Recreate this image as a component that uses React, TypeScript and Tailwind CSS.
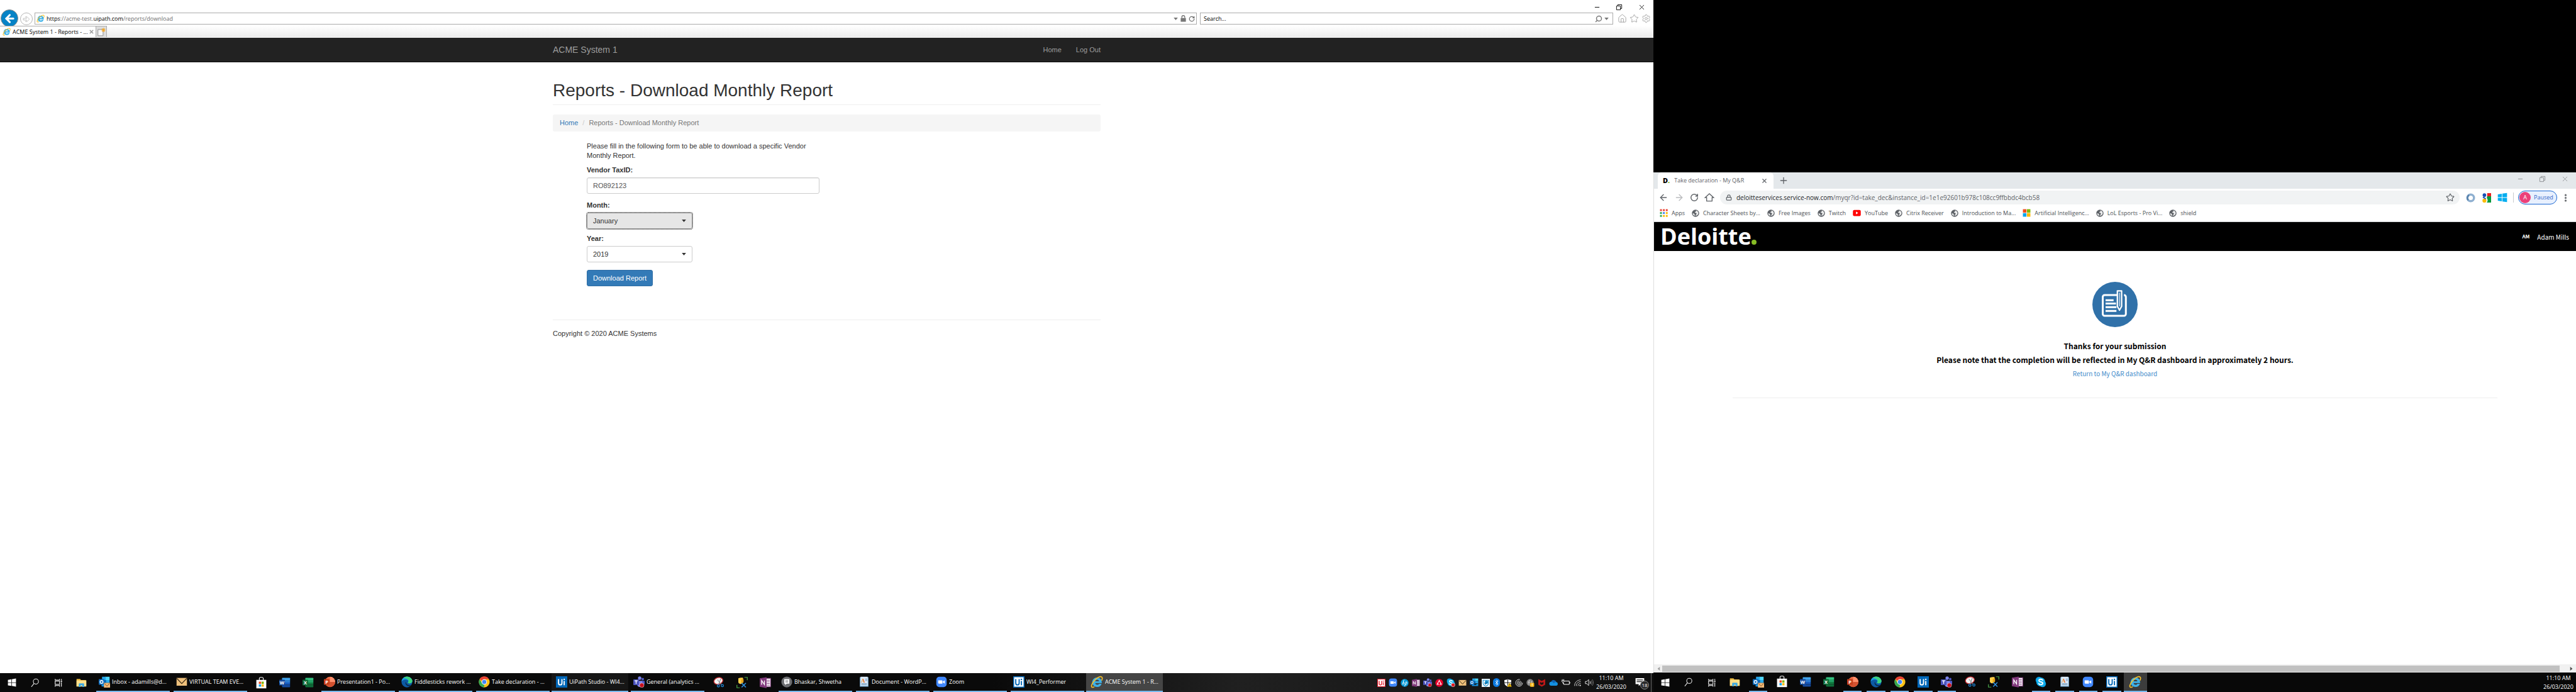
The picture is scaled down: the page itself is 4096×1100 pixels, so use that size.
import React from "react";
import {
  ArrowLeft,
  ArrowRight,
  Bluetooth,
  Home,
  Lock,
  Minus,
  MoreVertical,
  Plus,
  RotateCw,
  Search,
  Settings,
  Star,
  X,
} from "lucide-react";

type IconProps = { className?: string };

const UI = "font-['Open_Sans','Noto_Sans',sans-serif]";

/* ---------- Brand and application icons ---------- */

function Svg({ className = "size-[18px]", children }: IconProps & { children: React.ReactNode }) {
  return (
    <svg viewBox="0 0 24 24" className={`shrink-0 ${className}`} aria-hidden="true">
      {children}
    </svg>
  );
}

function WindowsIcon({ className }: IconProps) {
  return (
    <Svg className={className ?? "size-[14px]"}>
      <path fill="currentColor" d="M1 4.5 10.5 3v8.400H1zM11.800 2.800 23 1v10.400H11.800zM1 12.700h9.500V21L1 19.600zM11.800 12.700H23V23l-11.200-1.800z" />
    </Svg>
  );
}

function SearchGlyph() {
  return (
    <Svg className="size-[15px]">
      <circle cx="14.5" cy="8.5" r="6.5" fill="none" stroke="#fff" strokeWidth="1.6" />
      <path d="M10 13.2 3 22" stroke="#fff" strokeWidth="1.8" />
    </Svg>
  );
}

function TaskViewIcon() {
  return (
    <Svg className="size-[14px]">
      <g fill="none" stroke="#fff" strokeWidth="1.8">
        <rect x="3" y="8" width="12" height="9" />
        <path d="M3 2v3h12V2M3 23v-3h12v3M20 2v4M20 11v12" />
        <path d="M20 7v3" strokeWidth="3.4" />
      </g>
    </Svg>
  );
}

function ExplorerIcon() {
  return (
    <Svg className="size-[17px]">
      <path fill="#e8b53a" d="M1 3h8l2 2.5h11V20H1z" />
      <path fill="#ffe08a" d="M1 6.5h22V20H1z" />
      <path fill="#3fa9e0" d="M6 21v-6.5A1.5 1.5 0 0 1 7.5 13h9a1.5 1.5 0 0 1 1.5 1.5V21h-4v-3.5h-4V21z" />
    </Svg>
  );
}

function OutlookIcon({ mail = false, className }: IconProps & { mail?: boolean }) {
  return (
    <Svg className={className}>
      <path fill="#50d9ff" d="M14 1h9v7h-9z" />
      <path fill="#28a8ea" d="M7 1h8v7H7zM15 8h8v6h-8z" />
      <path fill="#0364b8" d="M7 8h8v7H7z" />
      <path fill="#1490df" d="M6 21.5V14l8.5 5L23 14v7.5z" />
      <rect x="0" y="6" width="12" height="12" rx="1" fill="#0f6cbd" />
      <circle cx="6" cy="12" r="3" fill="none" stroke="#fff" strokeWidth="1.8" />
      {mail && (
        <>
          <rect x="11" y="14" width="13" height="10" fill="#f0b878" />
          <path d="m12 15 5.5 6 5.5-6" fill="none" stroke="#7a4a1c" strokeWidth="1.2" />
        </>
      )}
    </Svg>
  );
}

function MailIcon({ className }: IconProps) {
  return (
    <Svg className={className}>
      <rect x="1" y="3.5" width="22" height="16.5" fill="#eec07c" />
      <path d="m1.5 4.5 10.5 11 10.5-11" fill="none" stroke="#3a2a14" strokeWidth="1.8" />
    </Svg>
  );
}

function StoreIcon() {
  return (
    <Svg className="size-[19px]">
      <path d="M8 7V3.5A2.5 2.5 0 0 1 10.5 1h3A2.5 2.5 0 0 1 16 3.5V7" fill="none" stroke="#fff" strokeWidth="1.4" />
      <path fill="#fff" d="M2 6h20v17H2z" />
      <path fill="#f25022" d="M7 9.5h4.6V14H7z" />
      <path fill="#7fba00" d="M12.5 9.5H17V14h-4.5z" />
      <path fill="#00a4ef" d="M7 15h4.6v4.5H7z" />
      <path fill="#ffb900" d="M12.5 15H17v4.5h-4.5z" />
    </Svg>
  );
}

function OfficeIcon({ letter, shades }: { letter: string; shades: string[] }) {
  return (
    <Svg>
      <path fill={shades[0]} d="M7 2h15a1 1 0 0 1 1 1v4.5H6V3a1 1 0 0 1 1-1z" />
      <path fill={shades[1]} d="M6 7.5h17V12H6z" />
      <path fill={shades[2]} d="M6 12h17v4.5H6z" />
      <path fill={shades[3]} d="M6 16.5h17V21a1 1 0 0 1-1 1H7a1 1 0 0 1-1-1z" />
      <rect x="0" y="6" width="12" height="12" rx="1" fill={shades[3]} />
      <text x="6" y="15.5" textAnchor="middle" fontSize="10" fontWeight="700" fill="#fff" fontFamily="Open Sans, sans-serif">
        {letter}
      </text>
    </Svg>
  );
}

const WordIcon = () => <OfficeIcon letter="W" shades={["#41a5ee", "#2b7cd3", "#185abd", "#144a9e"]} />;
const ExcelIcon = () => <OfficeIcon letter="X" shades={["#33c481", "#21a366", "#107c41", "#0f6b38"]} />;

function PowerPointIcon() {
  return (
    <Svg>
      <circle cx="13" cy="12" r="11" fill="#ed6c47" />
      <path fill="#ff8f6b" d="M13 1a11 11 0 0 1 11 11H13z" />
      <path fill="#d35230" d="M2 12h22a11 11 0 0 1-22 0z" />
      <rect x="0" y="6" width="12" height="12" rx="1" fill="#c43e1c" />
      <text x="6" y="15.5" textAnchor="middle" fontSize="10" fontWeight="700" fill="#fff" fontFamily="Open Sans, sans-serif">
        P
      </text>
    </Svg>
  );
}

function EdgeIcon() {
  return (
    <Svg>
      <circle cx="12" cy="12" r="11.5" fill="#0c59a4" />
      <path fill="#1b9de2" d="M.5 12C.8 5 6 .5 12 .5S23.500 5 23.500 10c0 3-2.500 5-5.500 5-2.500 0-4-.8-4-1.800 0-.7 1-1 1-2.700C15 8.500 13 7 10 7 5 7 .8 9.500.5 12z" />
      <path fill="#3fd37e" d="M12 .5c6.500 0 11.500 4.500 11.500 9.500 0 3-2.500 5-5.500 5-2.500 0-4-.8-4-1.800 0-.7 1.500-1.200 1.500-3.200C15.500 6 11 4 5 3.500 7 1.500 9.500.5 12 .5z" />
      <path fill="#0a2a4a" d="M10 12c0 4 4 7.500 9 7 1.200-.1 2.500-.7 3-1-.5 1-1.500 2.200-3 3.200-5.500.8-11-3.200-10-8.200z" />
    </Svg>
  );
}

function ChromeIcon() {
  return (
    <Svg>
      <circle cx="12" cy="12" r="11.5" fill="#fbc116" />
      <path fill="#ea4335" d="M12 12 2 6.300A11.500 11.500 0 0 1 22 6.300H12z" />
      <path fill="#34a853" d="M2 6.300 7.500 15l4.500 2.500L11.500 23.500A11.500 11.500 0 0 1 2 6.300z" />
      <circle cx="12" cy="12" r="5.7" fill="#fff" />
      <circle cx="12" cy="12" r="4.4" fill="#4285f4" />
    </Svg>
  );
}

function UiPathIcon({ bg = "#0067b8", fg = "#fff", frame = false, className }: IconProps & { bg?: string; fg?: string; frame?: boolean }) {
  return (
    <Svg className={className ?? "size-[18px]"}>
      <rect x="0" y="0" width="24" height="24" fill={frame ? fg : bg} />
      {frame && <rect x="2" y="2" width="20" height="20" fill={bg} />}
      <path d="M5.500 6v8.500a3.600 3.600 0 0 0 7.200 0V6M17.500 10v9" fill="none" stroke={fg} strokeWidth="2.5" />
      <circle cx="17.5" cy="6.500" r="1.6" fill={fg} />
    </Svg>
  );
}

function TeamsIcon({ className }: IconProps) {
  return (
    <Svg className={className}>
      <circle cx="20" cy="6" r="2.6" fill="#5059c9" />
      <circle cx="13.5" cy="4" r="3.6" fill="#7b83eb" />
      <path fill="#5059c9" d="M17 9.500h7V15a4 4 0 0 1-5 4z" />
      <path fill="#7b83eb" d="M8 9.500h11V17a5.500 5.500 0 0 1-11 0z" />
      <rect x="0" y="6.5" width="12" height="12" rx="1" fill="#4b53bc" />
      <path d="M3 9.700h6M6 9.700V16" stroke="#fff" strokeWidth="1.8" />
      <circle cx="18" cy="19" r="4.7" fill="#c50f1f" stroke="#f3d7da" strokeWidth="0.8" />
    </Svg>
  );
}

function SnipIcon() {
  return (
    <Svg>
      <ellipse cx="11" cy="8.5" rx="9.5" ry="7" fill="#f4f4f4" stroke="#d13438" strokeWidth="1.8" transform="rotate(-18 11 8.5)" />
      <path d="M9 6 18 17M16 4l-4 11" stroke="#8a8f96" strokeWidth="1.5" />
      <circle cx="11" cy="19" r="2.4" fill="none" stroke="#1f86d6" strokeWidth="1.7" />
      <circle cx="19.5" cy="18.5" r="2.4" fill="none" stroke="#1f86d6" strokeWidth="1.7" />
    </Svg>
  );
}

function ToolIcon() {
  return (
    <Svg>
      <path d="M7 23H1v-6M17 1h6v6" fill="none" stroke="#4aa84a" strokeWidth="1.6" />
      <path fill="#ffd04a" d="M4 3c5-2 10-1 10-1v9c0 3-4 4-5 4s-5-1-5-4z" />
      <path fill="#e8a317" d="M10 6c3-2 5-1 5-1v6l-5 4z" />
      <path d="m11 13 9 9M20 13 11 22" stroke="#2f8fdf" strokeWidth="2.2" />
    </Svg>
  );
}

function OneNoteIcon({ className }: IconProps) {
  return (
    <Svg className={className}>
      <path fill="#fff" d="M13 3h10v18H13z" stroke="#80397b" strokeWidth="1.4" />
      <path d="M15 7h6M15 10.500h6M15 14h6M15 17.500h6" stroke="#80397b" strokeWidth="1.3" />
      <path fill="#80397b" d="M0 3 14.500.5v23L0 21z" />
      <path d="M4 16.500v-9l6 9v-9" fill="none" stroke="#fff" strokeWidth="1.8" />
    </Svg>
  );
}

function ChatIcon() {
  return (
    <Svg>
      <circle cx="12" cy="12" r="11.5" fill="#6d6e71" />
      <path fill="#fff" d="M6.500 6h11v9.500H12L8.500 18.500v-3h-2z" />
      <path d="M9 9.500h6M9 12.200h6" stroke="#6d6e71" strokeWidth="1.2" />
    </Svg>
  );
}

function WordPadIcon() {
  return (
    <Svg>
      <path fill="#8fc2ea" d="M3 2h18v20H3z" />
      <path fill="#dcebf8" d="M4.500 1h15v19h-15z" />
      <text x="9.5" y="13" textAnchor="middle" fontSize="12" fontWeight="700" fill="#e87722" fontFamily="Liberation Serif, serif">
        A
      </text>
      <path d="M14.500 6h4M14.500 9h4M6 15.500h12M6 18h12" stroke="#5e87ad" strokeWidth="1.2" />
    </Svg>
  );
}

function ZoomIcon({ className }: IconProps) {
  return (
    <Svg className={className}>
      <rect x="1" y="1" width="22" height="22" rx="6.5" fill="#4087fc" />
      <path fill="#fff" d="M5 8.500h7.500A1.500 1.500 0 0 1 14 10v5.500H6.500A1.500 1.500 0 0 1 5 14zM15 11l4-2.500v7L15 13z" />
    </Svg>
  );
}

function SkypeIcon({ className, busy = false }: IconProps & { busy?: boolean }) {
  return (
    <Svg className={className}>
      <circle cx="8" cy="8" r="7" fill="#0a9fe0" />
      <circle cx="16" cy="16" r="7" fill="#0a9fe0" />
      <circle cx="12" cy="12" r="9.5" fill="#12b0ee" />
      <path d="M16 8.300C15 6.800 13.600 6.300 12 6.300c-2.200 0-3.900 1-3.900 2.800 0 4 8 1.800 8 5.700 0 1.900-1.800 2.900-4.100 2.900-2 0-3.600-.8-4.300-2.300" fill="none" stroke="#fff" strokeWidth="2.4" strokeLinecap="round" />
      {busy && <circle cx="18" cy="18.5" r="5" fill="#d9141e" stroke="#fff" strokeWidth="1" />}
    </Svg>
  );
}

function IeIcon({ className }: IconProps) {
  return (
    <Svg className={className}>
      <path
        fill="#3db1e8"
        fillRule="evenodd"
        d="M12.500 3.500c5.400 0 9 4 9 9.300v1.400H9c.2 2 1.700 3.200 3.800 3.200 1.600 0 2.700-.6 3.300-1.800h5c-1 3.700-4.300 6-8.500 6-5.600 0-9.300-3.800-9.300-9s3.800-9.100 9.200-9.100zM9 10.800h7.400c-.3-1.900-1.700-3.100-3.700-3.100S9.300 8.900 9 10.800z"
      />
      <path
        fill="none"
        stroke="#f5c02b"
        strokeWidth="2"
        strokeLinecap="round"
        d="M21.500 8.500C23.500 4 22 1.500 18.500 2 12 3.200 3.800 12 2 18.500c-.8 3.500 1 4.500 4.500 3"
      />
    </Svg>
  );
}

function HpIcon() {
  return (
    <Svg className="size-[13px]">
      <circle cx="12" cy="12" r="11.5" fill="#0096d6" />
      <path d="M10 3 5.500 17M7.500 11.500c2-1.500 4-1 3.300 1.200L9.300 17M16.500 8l-4.500 14M15.500 10c3-1 4.300.5 3.300 3.500-.8 2.500-2.500 3.500-4.800 3" fill="none" stroke="#fff" strokeWidth="1.8" />
    </Svg>
  );
}

function RingTriangleIcon() {
  return (
    <Svg className="size-[13px]">
      <circle cx="12" cy="12" r="11.5" fill="#e4002b" />
      <path d="M12 5 6 16h12z" fill="none" stroke="#fff" strokeWidth="2.2" />
      <path d="M12 10.500V17" stroke="#e4002b" strokeWidth="3" />
    </Svg>
  );
}

function ShieldBadgeIcon() {
  return (
    <Svg className="size-[13px]">
      <rect width="24" height="24" fill="#f4fafe" />
      <path d="M4 4h16v9c0 4-4 7-8 8.500C8 20 4 17 4 13z" fill="#fff" stroke="#1795d4" strokeWidth="2" />
      <circle cx="14" cy="10" r="5" fill="#1795d4" />
      <path d="m8 12 3 4 6-8" fill="none" stroke="#0b5f92" strokeWidth="2" />
    </Svg>
  );
}

function DefenderIcon() {
  return (
    <Svg className="size-[13px]">
      <path d="M12 1c3 2 6.500 2.500 10 2.500V11c0 6-4 9.500-10 12C6 20.500 2 17 2 11V3.500C5.500 3.500 9 3 12 1z" fill="#fff" />
      <path d="M12 2v20M2 11.500h20" stroke="#111" strokeWidth="1.8" />
      <path d="m17 11 6.500 12h-13z" fill="#fdc300" />
      <path d="M17 15v4M17 20.300v1.400" stroke="#111" strokeWidth="1.6" />
    </Svg>
  );
}

function SwirlIcon() {
  return (
    <Svg className="size-[13px]">
      <g fill="none" stroke="#e8e8e8" strokeWidth="1.8">
        <path d="M14 2a10 10 0 1 0 8 10" />
        <path d="M12 6a6 6 0 1 0 6.500 6c0-3-2-5-4.500-5" />
        <circle cx="12.5" cy="12" r="2.3" />
      </g>
    </Svg>
  );
}

function FsIcon() {
  return (
    <Svg className="size-[13px]">
      <circle cx="11" cy="11" r="10.5" fill="#7f7f7f" />
      <path d="M11 5c-2.500-.5-3.500.5-3.500 3v9M5 10h5.500M17 8c-3-1-4.500 2-2 3s2 3.500-1.500 3" fill="none" stroke="#ddd" strokeWidth="1.8" />
      <rect x="11" y="12" width="12" height="11.5" rx="2" fill="#fdb813" />
      <path d="M17 14v5M17 20.500V22" stroke="#fff" strokeWidth="2" />
    </Svg>
  );
}

function McAfeeIcon() {
  return (
    <Svg className="size-[13px]">
      <path fill="#c01818" d="m2 1 10 5.500L22 1v16.500L12 23 2 17.500zM7 9v6l5 2.800 5-2.800V9l-5 2.800z" fillRule="evenodd" />
    </Svg>
  );
}

function CloudIcon() {
  return (
    <Svg className="size-[15px]">
      <path fill="#1490df" d="M6 19a5 5 0 0 1-.5-10A7 7 0 0 1 18.500 10 4.600 4.600 0 0 1 19 19z" />
      <path fill="#0f5fb0" d="M5.500 9A7 7 0 0 1 18.500 10c-3-.5-5 1-6 3C10 10 8 9 5.500 9z" />
    </Svg>
  );
}

function BatteryIcon() {
  return (
    <Svg className="size-[14px]">
      <g fill="none" stroke="#fff" strokeWidth="1.7">
        <path d="M8 8h13v9H6v-3" />
        <path d="M22.500 10.500v4M2 3v3M6 3v3M1 6.500h6v2.300c0 1.500-1.200 2.200-3 2.200s-3-.7-3-2.200zM4 11v4h2" />
      </g>
    </Svg>
  );
}

function WifiIcon() {
  return (
    <Svg className="size-[13px]">
      <g fill="none" stroke="#e6e6e6" strokeWidth="1.6">
        <path d="M3 21C3 11 10 4 21 3" />
        <path d="M8 21c0-7 5-12 13-13" />
        <path d="M13 21c0-4 3-7.500 8-8" />
      </g>
      <circle cx="19.5" cy="19.5" r="2" fill="#fff" />
    </Svg>
  );
}

function SpeakerIcon() {
  return (
    <Svg className="size-[14px]">
      <g fill="none" stroke="#fff" strokeWidth="1.5">
        <path d="M1.500 9v6h4l5 5V4l-5 5z" />
        <path d="M14 8.500c1.500 2 1.500 5 0 7" />
        <path d="M17 6c3 3.500 3 8.500 0 12M20 3.500c4 5 4 12 0 17" stroke="#8a8a8a" />
      </g>
    </Svg>
  );
}

function GlobeIcon() {
  return (
    <Svg className="size-[12px]">
      <circle cx="12" cy="12" r="11.5" fill="#5f6368" />
      <path fill="#fff" d="M13 3c2 2 .5 4-2 4.500-2 .5-1 3 1 3 3 0 4 2 3 4.500-1 2-3 2-3 5 5-.5 9-4 9-8.500S17.500 3.500 13 3z" opacity="0.9" />
      <path fill="#fff" d="M3 12.500c3-.5 5 .5 5.500 2.500.3 1.500 1.500 2 1.500 5C6 19.500 3 16 3 12.500z" opacity="0.9" />
    </Svg>
  );
}

function YouTubeIcon() {
  return (
    <Svg className="size-[13px]">
      <rect x="0.5" y="3" width="23" height="18" rx="4" fill="#f00" />
      <path fill="#fff" d="m9.500 8 6.500 4-6.500 4z" />
    </Svg>
  );
}

function MicrosoftIcon() {
  return (
    <Svg className="size-[13px]">
      <path fill="#f25022" d="M1 1h10.300v10.300H1z" />
      <path fill="#7fba00" d="M12.700 1H23v10.300H12.700z" />
      <path fill="#00a4ef" d="M1 12.700h10.300V23H1z" />
      <path fill="#ffb900" d="M12.700 12.700H23V23H12.700z" />
    </Svg>
  );
}

function AppsIcon() {
  const colors = ["#ea4335", "#ea4335", "#ea4335", "#34a853", "#4285f4", "#fbbc05", "#34a853", "#fbbc05", "#fbbc05"];
  return (
    <Svg className="size-[13px]">
      {colors.map((c, i) => (
        <rect key={i} x={1 + (i % 3) * 8.5} y={1 + Math.floor(i / 3) * 8.5} width="5.5" height="5.5" fill={c} />
      ))}
    </Svg>
  );
}

function RestoreIcon({ className }: IconProps) {
  return (
    <Svg className={className ?? "size-[11px]"}>
      <path d="M3 7.500h13.500V21H3zM7.500 7V3H21v13.500h-4" fill="none" stroke="currentColor" strokeWidth="2" />
    </Svg>
  );
}

function Caret({ className }: IconProps) {
  return (
    <svg viewBox="0 0 10 6" className={`h-[4px] w-[7px] ${className ?? ""}`} aria-hidden="true">
      <path d="M0 0h10L5 6z" fill="currentColor" />
    </svg>
  );
}

/* ---------- Taskbars ---------- */

function StartIcons() {
  return (
    <>
      {[
        ["Start", <WindowsIcon />],
        ["Search", <SearchGlyph />],
        ["Task view", <TaskViewIcon />],
        ["File Explorer", <ExplorerIcon />],
      ].map(([label, icon]) => (
        <button key={label as string} aria-label={label as string} className="flex h-full w-[37px] shrink-0 items-center justify-center text-white">
          {icon}
        </button>
      ))}
    </>
  );
}

function TaskEntry({ icon, label, tone = "mr-[6px] w-[117px] pl-[4px]" }: { icon: React.ReactNode; label: string; tone?: string }) {
  return (
    <button
      className={`flex h-full shrink-0 items-center gap-[3px] border-b-2 border-[#76b9ed] text-left text-[9px] whitespace-nowrap text-white ${tone}`}
    >
      {icon}
      <span className="overflow-hidden">{label}</span>
    </button>
  );
}

function PinnedGroup({ items }: { items: [string, React.ReactNode][] }) {
  return (
    <div className="grid h-full w-[112px] shrink-0 grid-cols-3">
      {items.map(([label, icon]) => (
        <button key={label} aria-label={label} className="flex items-center justify-center pr-[4px]">
          {icon}
        </button>
      ))}
    </div>
  );
}

function Clock() {
  return (
    <div className="w-[56px] shrink-0 text-center text-[9px] leading-[14px] text-white">
      <div>11:10 AM</div>
      <div>26/03/2020</div>
    </div>
  );
}

function MainTaskbar() {
  return (
    <footer className="flex h-[30px] items-center bg-linear-to-r from-[#0a0a0a] from-60% via-[#202020] via-75% to-[#101010]">
      <StartIcons />
      <div className="w-[5px]" />
      <TaskEntry icon={<OutlookIcon mail />} label="Inbox - adamills@d..." />
      <TaskEntry icon={<MailIcon />} label="VIRTUAL TEAM EVE..." />
      <PinnedGroup items={[["Store", <StoreIcon />], ["Word", <WordIcon />], ["Excel", <ExcelIcon />]]} />
      <TaskEntry icon={<PowerPointIcon />} label="Presentation1 - Po..." />
      <TaskEntry icon={<EdgeIcon />} label="Fiddlesticks rework ..." />
      <TaskEntry icon={<ChromeIcon />} label="Take declaration - ..." />
      <TaskEntry icon={<UiPathIcon />} label="UiPath Studio - WI4..." tone="-ml-[3px] mr-[4px] w-[122px] pl-[7px] bg-[#161616]" />
      <TaskEntry icon={<TeamsIcon />} label="General (analytics ..." />
      <PinnedGroup items={[["Snipping Tool", <SnipIcon />], ["Tools", <ToolIcon />], ["OneNote", <OneNoteIcon />]]} />
      <TaskEntry icon={<ChatIcon />} label="Bhaskar, Shwetha" />
      <TaskEntry icon={<WordPadIcon />} label="Document - WordP..." />
      <TaskEntry icon={<ZoomIcon />} label="Zoom" />
      <TaskEntry icon={<UiPathIcon bg="#fff" fg="#0067b8" frame />} label="WI4_Performer" />
      <TaskEntry icon={<IeIcon className="size-[20px]" />} label="ACME System 1 - R..." tone="-ml-[3px] mr-[4px] w-[122px] pl-[7px] bg-[#454545]" />
      <div className="ml-auto flex w-[344px] shrink-0 items-center justify-between">
        <UiPathIcon className="size-[13px]" bg="#fff" fg="#e5202e" frame />
        <ZoomIcon className="size-[14px]" />
        <HpIcon />
        <OneNoteIcon className="size-[13px]" />
        <TeamsIcon className="size-[14px]" />
        <RingTriangleIcon />
        <SkypeIcon className="size-[14px]" busy />
        <MailIcon className="size-[13px]" />
        <OutlookIcon className="size-[14px]" />
        <ShieldBadgeIcon />
        <span className="flex h-[14px] w-[11px] items-center justify-center rounded-full bg-[#0a78e0] text-white">
          <Bluetooth size={10} />
        </span>
        <DefenderIcon />
        <SwirlIcon />
        <FsIcon />
        <McAfeeIcon />
        <CloudIcon />
        <BatteryIcon />
        <WifiIcon />
        <SpeakerIcon />
      </div>
      <Clock />
      <button aria-label="Notifications, 18 new" className="relative mr-[3px] ml-[3px] flex h-full w-[28px] items-center justify-center text-white">
        <Svg className="size-[15px]">
          <path fill="#fff" d="M1 0h22v15h-9l-5 5v-5H1z" />
          <path d="M4 4.500h16M4 9h16" stroke="#111" strokeWidth="1.8" />
        </Svg>
        <span className="absolute right-[-1px] bottom-[4px] flex size-[14px] items-center justify-center rounded-full border border-[#8a8a8a] bg-[#2a2a2a] text-[8px] leading-none">
          18
        </span>
      </button>
      <div className="ml-px h-full w-[4px] border-l border-[#666]" />
    </footer>
  );
}

const SECOND_TASKS: { label: string; icon: React.ReactNode; open?: boolean; active?: boolean }[] = [
  { label: "Outlook", icon: <OutlookIcon mail />, open: true },
  { label: "Store", icon: <StoreIcon /> },
  { label: "Word", icon: <WordIcon /> },
  { label: "Excel", icon: <ExcelIcon /> },
  { label: "PowerPoint", icon: <PowerPointIcon />, open: true },
  { label: "Edge", icon: <EdgeIcon />, open: true },
  { label: "Chrome", icon: <ChromeIcon />, open: true },
  { label: "UiPath Studio", icon: <UiPathIcon />, open: true },
  { label: "Teams", icon: <TeamsIcon />, open: true },
  { label: "Snipping Tool", icon: <SnipIcon /> },
  { label: "Tools", icon: <ToolIcon /> },
  { label: "OneNote", icon: <OneNoteIcon /> },
  { label: "Skype", icon: <SkypeIcon />, open: true },
  { label: "WordPad", icon: <WordPadIcon />, open: true },
  { label: "Zoom", icon: <ZoomIcon />, open: true },
  { label: "UiPath Robot", icon: <UiPathIcon bg="#fff" fg="#0067b8" frame />, open: true },
  { label: "Internet Explorer", icon: <IeIcon className="size-[20px]" />, open: true, active: true },
];

function SecondTaskbar() {
  return (
    <footer className="flex h-[31px] items-center bg-[#080808]">
      <StartIcons />
      <div className="grid h-full w-[637px] grid-cols-[repeat(17,minmax(0,1fr))]">
        {SECOND_TASKS.map(({ label, icon, open, active }) => (
          <button key={label} aria-label={label} className={active ? "flex flex-col items-center bg-[#3c3c3c]" : "flex flex-col items-center px-[4px]"}>
            <span className="flex flex-1 items-center">{icon}</span>
            <span className={open ? "h-[2px] w-full bg-[#76b9ed]" : "h-[2px] w-full"} />
          </button>
        ))}
      </div>
      <div className="ml-auto">
        <Clock />
      </div>
    </footer>
  );
}

/* ---------- Internet Explorer window ---------- */

function IeChrome() {
  return (
    <header>
      <div className="flex h-[20px] items-center justify-end gap-[24px] pt-[2px] pr-[12px] text-black">
        <button aria-label="Minimize"><Minus size={11} /></button>
        <button aria-label="Restore"><RestoreIcon /></button>
        <button aria-label="Close"><X size={13} strokeWidth={1.5} /></button>
      </div>
      <div className="flex h-[21px] items-start pl-px">
        <button aria-label="Back" className="-mt-[5px] flex size-[28px] shrink-0 items-center justify-center rounded-full border border-[#8b8b8b] bg-[#0683c6] text-white">
          <ArrowLeft size={19} strokeWidth={4} />
        </button>
        <button aria-label="Forward" className="ml-[3px] flex size-[20px] shrink-0 items-center justify-center rounded-full border border-[#b4b4b4] text-[#b4b4b4]">
          <Svg className="size-[13px]">
            <path d="M2 9.500h10L8.500 5h4.500l7 7-7 7H8.500L12 14.500H2z" fill="none" stroke="currentColor" strokeWidth="1.5" />
          </Svg>
        </button>
        <div className="ml-[3px] flex h-[19px] min-w-0 flex-1 items-center border border-[#ababab] px-[2px] text-[9px] text-[#6d6d6d]">
          <IeIcon className="size-[13px]" />
          <a href="#address" className="ml-[3px] flex-1">
            <span className="text-black">https</span>://acme-test.<span className="text-black">uipath.com</span>/reports/download
          </a>
          <Caret className="mr-[3px] text-[#777]" />
          <Svg className="mr-[3px] size-[11px]">
            <path fill="#777" d="M3 10h18v13H3z" />
            <path d="M7 10V6.500a5 5 0 0 1 10 0V10" fill="none" stroke="#777" strokeWidth="3" />
          </Svg>
          <RotateCw size={10} strokeWidth={3} />
        </div>
        <div className="ml-[5px] flex h-[19px] w-[657px] items-center border border-[#ababab] pr-[6px] pl-[5px]">
          <input aria-label="Search" placeholder="Search..." className="min-w-0 flex-1 text-[9px] placeholder:text-black" />
          <Search size={12} strokeWidth={3} className="mr-[3px] -scale-x-100 text-[#777]" />
          <Caret className="text-[#777]" />
        </div>
        <div className="mr-[4px] ml-[7px] flex h-[19px] items-center gap-[4px] text-[#a0a0a0]">
          <Home size={15} strokeWidth={1.5} />
          <Star size={15} strokeWidth={1.5} />
          <Settings size={15} strokeWidth={1.5} />
        </div>
      </div>
      <div className="relative flex h-[19px] border-b border-white bg-linear-to-b from-white to-[#ebebeb]">
        <div className="flex w-[153px] items-center border-t border-r border-[#ababab] bg-white pl-[4px] text-[9px] whitespace-nowrap text-black">
          <IeIcon className="size-[13px]" />
          <span className="ml-[3px] flex-1">ACME System 1 - Reports - ...</span>
          <button aria-label="Close tab" className="mr-[2px] text-[#999]"><X size={9} strokeWidth={4} /></button>
        </div>
        <button aria-label="New tab" className="flex w-[17px] items-center justify-center border-t border-r border-[#ababab] bg-[#dcdcdc]">
          <Svg className="size-[14px]">
            <path d="M3 5h14v17H3z" fill="#f8f8f8" stroke="#888" strokeWidth="1.5" />
            <path d="M18 1v11M12.500 6.500h11M14 2.500l8 8M22 2.500l-8 8" stroke="#f5a623" strokeWidth="1.8" />
          </Svg>
        </button>
      </div>
    </header>
  );
}

function SelectField({ id, label, value, focused = false }: { id: string; label: string; value: string; focused?: boolean }) {
  return (
    <>
      <label htmlFor={id} className="mb-[4px] block font-bold">{label}</label>
      <div className="relative w-[168px]">
        <select
          id={id}
          defaultValue={value}
          className={`h-[26px] w-full appearance-none rounded-[3px] border px-[9px] ${
            focused ? "border-[#8c8c8c] bg-[#e6e6e6] outline outline-dotted outline-[#333]" : "border-[#ccc] bg-white"
          }`}
        >
          <option>{value}</option>
        </select>
        <Caret className="pointer-events-none absolute top-[11px] right-[10px]" />
      </div>
    </>
  );
}

function AcmePage() {
  return (
    <div className="flex-1 bg-white font-['Liberation_Sans',Arial,sans-serif] text-[11px] leading-[15px] text-[#333]">
      <nav className="h-[39px] border-b border-[#080808] bg-[#222] text-[#9d9d9d]">
        <div className="mx-auto flex h-full w-[871px] items-center">
          <a href="#brand" className="flex-1 text-[14px]">ACME System 1</a>
          <a href="#home">Home</a>
          <a href="#logout" className="ml-[23px]">Log Out</a>
        </div>
      </nav>
      <main className="mx-auto w-[871px] pt-[30px]">
        <h1 className="border-b border-[#eee] pb-[7px] text-[28px] leading-[30px]">Reports - Download Monthly Report</h1>
        <nav className="mt-[15px] flex h-[27px] items-center rounded-[3px] bg-[#f5f5f5] px-[11px] text-[#777]">
          <a href="#home" className="text-[#337ab7]">Home</a>
          <span className="px-[7px] text-[#ccc]">/</span>
          <span>Reports - Download Monthly Report</span>
        </nav>
        <form className="mt-[16px] ml-[54px] w-[370px]">
          <p>Please fill in the following form to be able to download a specific Vendor Monthly Report.</p>
          <label htmlFor="tax" className="mt-[8px] mb-[4px] block font-bold">Vendor TaxID:</label>
          <input id="tax" defaultValue="RO892123" className="mb-[11px] block h-[26px] w-full rounded-[3px] border border-[#ccc] px-[9px] text-[#555] shadow-[inset_0_1px_1px_rgba(0,0,0,0.075)]" />
          <SelectField id="month" label="Month:" value="January" focused />
          <div className="mt-[8px]">
            <SelectField id="year" label="Year:" value="2019" />
          </div>
          <button type="button" className="mt-[12px] h-[26px] rounded-[3px] border border-[#2e6da4] bg-[#337ab7] px-[9px] text-white">
            Download Report
          </button>
        </form>
        <div className="mt-[53px] border-t border-[#eee] pt-[14px]">Copyright © 2020 ACME Systems</div>
      </main>
    </div>
  );
}

/* ---------- Chrome window ---------- */

const BOOKMARKS: [string, React.ReactNode][] = [
  ["Apps", <AppsIcon />],
  ["Character Sheets by...", <GlobeIcon />],
  ["Free Images", <GlobeIcon />],
  ["Twitch", <GlobeIcon />],
  ["YouTube", <YouTubeIcon />],
  ["Citrix Receiver", <GlobeIcon />],
  ["Introduction to Ma...", <GlobeIcon />],
  ["Artificial Intelligenc...", <MicrosoftIcon />],
  ["LoL Esports - Pro Vi...", <GlobeIcon />],
  ["shield", <GlobeIcon />],
];

function ChromeToolbars() {
  return (
    <header className="text-[#5f6368]">
      <div className="flex h-[26px] items-end bg-[#e4e8eb]">
        <div className="ml-[6px] flex h-full w-[184px] items-center rounded-t-[6px] bg-white pl-[8px] text-[9px]">
          <span className="text-[11px] font-extrabold text-black">D<span className="text-[#86bc25]">.</span></span>
          <span className="ml-[7px] flex-1">Take declaration - My Q&amp;R</span>
          <button aria-label="Close tab" className="mr-[9px]"><X size={11} strokeWidth={2.5} /></button>
        </div>
        <button aria-label="New tab" className="mb-[5px] ml-[8px]"><Plus size={16} /></button>
        <div className="mr-[11px] mb-[9px] ml-auto flex items-center gap-[24px] text-[#8a8d90]">
          <button aria-label="Minimize"><Minus size={11} /></button>
          <button aria-label="Restore"><RestoreIcon /></button>
          <button aria-label="Close"><X size={13} strokeWidth={1.5} /></button>
        </div>
      </div>
      <div className="flex h-[28px] items-center pl-[7px]">
        <button aria-label="Back"><ArrowLeft size={16} /></button>
        <button aria-label="Forward" className="ml-[9px] text-[#babcbe]"><ArrowRight size={16} /></button>
        <button aria-label="Reload" className="ml-[9px]"><RotateCw size={14} strokeWidth={2.5} /></button>
        <button aria-label="Home" className="ml-[9px]">
          <Svg className="size-[16px]">
            <path d="M2 12 12 3l10 9h-3.500v8.500h-13V12z" fill="none" stroke="currentColor" strokeWidth="2" />
          </Svg>
        </button>
        <div className="ml-[9px] flex h-[22px] flex-1 items-center rounded-full bg-[#f1f3f4] pr-[8px] pl-[9px] text-[10px]">
          <Lock size={10} strokeWidth={3} />
          <a href="#address" className="ml-[7px] flex-1">
            <span className="text-[#202124]">deloitteservices.service-now.com</span>/myqr?id=take_dec&amp;instance_id=1e1e92601b978c108cc9ffbbdc4bcb58
          </a>
          <Star size={14} />
        </div>
        <div className="mr-[9px] ml-[10px] flex items-center gap-[10px]">
          <Svg className="size-[15px]">
            <circle cx="12" cy="12" r="8.5" fill="none" stroke="#8fb0d0" strokeWidth="5.5" />
            <path d="M6 18A8.500 8.500 0 0 1 8 5" fill="none" stroke="#5781ab" strokeWidth="4" />
          </Svg>
          <Svg className="size-[15px]">
            <path fill="#fff" d="M0 0h24v24H0z" />
            <path fill="#ea2323" d="M14 0h10v8H14z" />
            <path fill="#0a9a3d" d="M14 8h10v16H13c3-4 3-8 0-12z" />
            <circle cx="7" cy="19" r="5" fill="#fbbc05" />
            <circle cx="7" cy="5" r="4.5" fill="#174fb5" />
            <path d="M3 11c5 0 6 2 7 4" fill="none" stroke="#174fb5" strokeWidth="3" />
          </Svg>
          <WindowsIcon className="size-[16px] text-[#00adef]" />
        </div>
        <div className="mr-[7px] h-[16px] w-px bg-[#c8cacd]" />
        <button className="flex h-[22px] w-[62px] items-center rounded-full border border-[#1967d2] bg-[#e8f0fe] pl-px text-[9px] text-[#3367c8]">
          <span className="mr-[5px] flex size-[18px] items-center justify-center rounded-full bg-[#ec407a] text-white">A</span>
          Paused
        </button>
        <button aria-label="Menu" className="mr-[9px] ml-[6px]"><MoreVertical size={15} strokeWidth={3} /></button>
      </div>
      <nav className="flex h-[25px] items-center gap-[11px] border-b border-[#d5d7d9] pb-[3px] pl-[9px] text-[9px] text-[#4b4f54]">
        {BOOKMARKS.map(([label, icon]) => (
          <a key={label} href="#bookmark" className="flex items-center gap-[6px] whitespace-nowrap">
            {icon}
            {label}
          </a>
        ))}
      </nav>
    </header>
  );
}

function DeloittePage() {
  return (
    <div className="flex flex-1 flex-col bg-white font-['Noto_Sans_CJK_SC','Open_Sans',sans-serif]">
      <div className="flex h-[46px] items-center bg-black pr-[11px] pl-[10px] text-white">
        <div className="flex flex-1 items-end font-['Open_Sans',sans-serif] text-[36px] leading-[40px] font-bold">
          Deloitte
          <span className="mb-[7px] size-[8px] rounded-full bg-[#86bc25]" />
        </div>
        <span className="mr-[12px] text-[8px] font-bold">AM</span>
        <a href="#profile" className="text-[10px]">Adam Mills</a>
      </div>
      <main className="flex flex-1 flex-col items-center pt-[49px] text-black">
        <svg viewBox="0 0 96 96" className="size-[72px]" aria-hidden="true">
          <circle cx="48" cy="48" r="48" fill="#3071a9" />
          <path d="M53 28H26a4 4 0 0 0-4 4v36a4 4 0 0 0 4 4h41a4 4 0 0 0 4-4V32a4 4 0 0 0-4-4" fill="none" stroke="#fff" strokeWidth="4" />
          <path d="M28 39h17M28 46h22M28 53.500h23M28 61.500h23" stroke="#fff" strokeWidth="4" />
          <path d="M53 19h9v33l-4.500 8-4.500-8z" fill="#3071a9" stroke="#fff" strokeWidth="3" strokeLinejoin="round" />
          <path d="M57.500 23v29" stroke="#fff" strokeWidth="1.5" />
        </svg>
        <h1 className="mt-[19px] text-[12px] leading-[22px] font-bold">Thanks for your submission</h1>
        <h2 className="text-[12px] leading-[22px] font-bold">
          Please note that the completion will be reflected in My Q&amp;R dashboard in approximately 2 hours.
        </h2>
        <a href="#dashboard" className="text-[10px] leading-[22px] text-[#428bca]">Return to My Q&amp;R dashboard</a>
        <hr className="mt-[27px] w-[83%] border-t border-[#eee]" />
      </main>
      <div className="flex h-[13px] items-center bg-[#f1f1f1] px-[4px]">
        <Caret className="rotate-90 text-[#a0a0a0]" />
        <div className="mr-[15px] ml-[2px] h-[10px] flex-1 bg-[#c1c1c1]" />
        <Caret className="-rotate-90 text-[#505050]" />
      </div>
    </div>
  );
}

export default function App() {
  return (
    <div className={`flex min-h-screen bg-black ${UI}`}>
      <section className="flex min-w-0 flex-[2629] flex-col bg-white">
        <IeChrome />
        <AcmePage />
        <MainTaskbar />
      </section>
      <section className="flex min-w-0 flex-[1467] flex-col">
        <div className="h-[274px] bg-black" />
        <div className="flex flex-1 flex-col border-l border-[#ddd] bg-white">
          <ChromeToolbars />
          <DeloittePage />
        </div>
        <SecondTaskbar />
      </section>
    </div>
  );
}
